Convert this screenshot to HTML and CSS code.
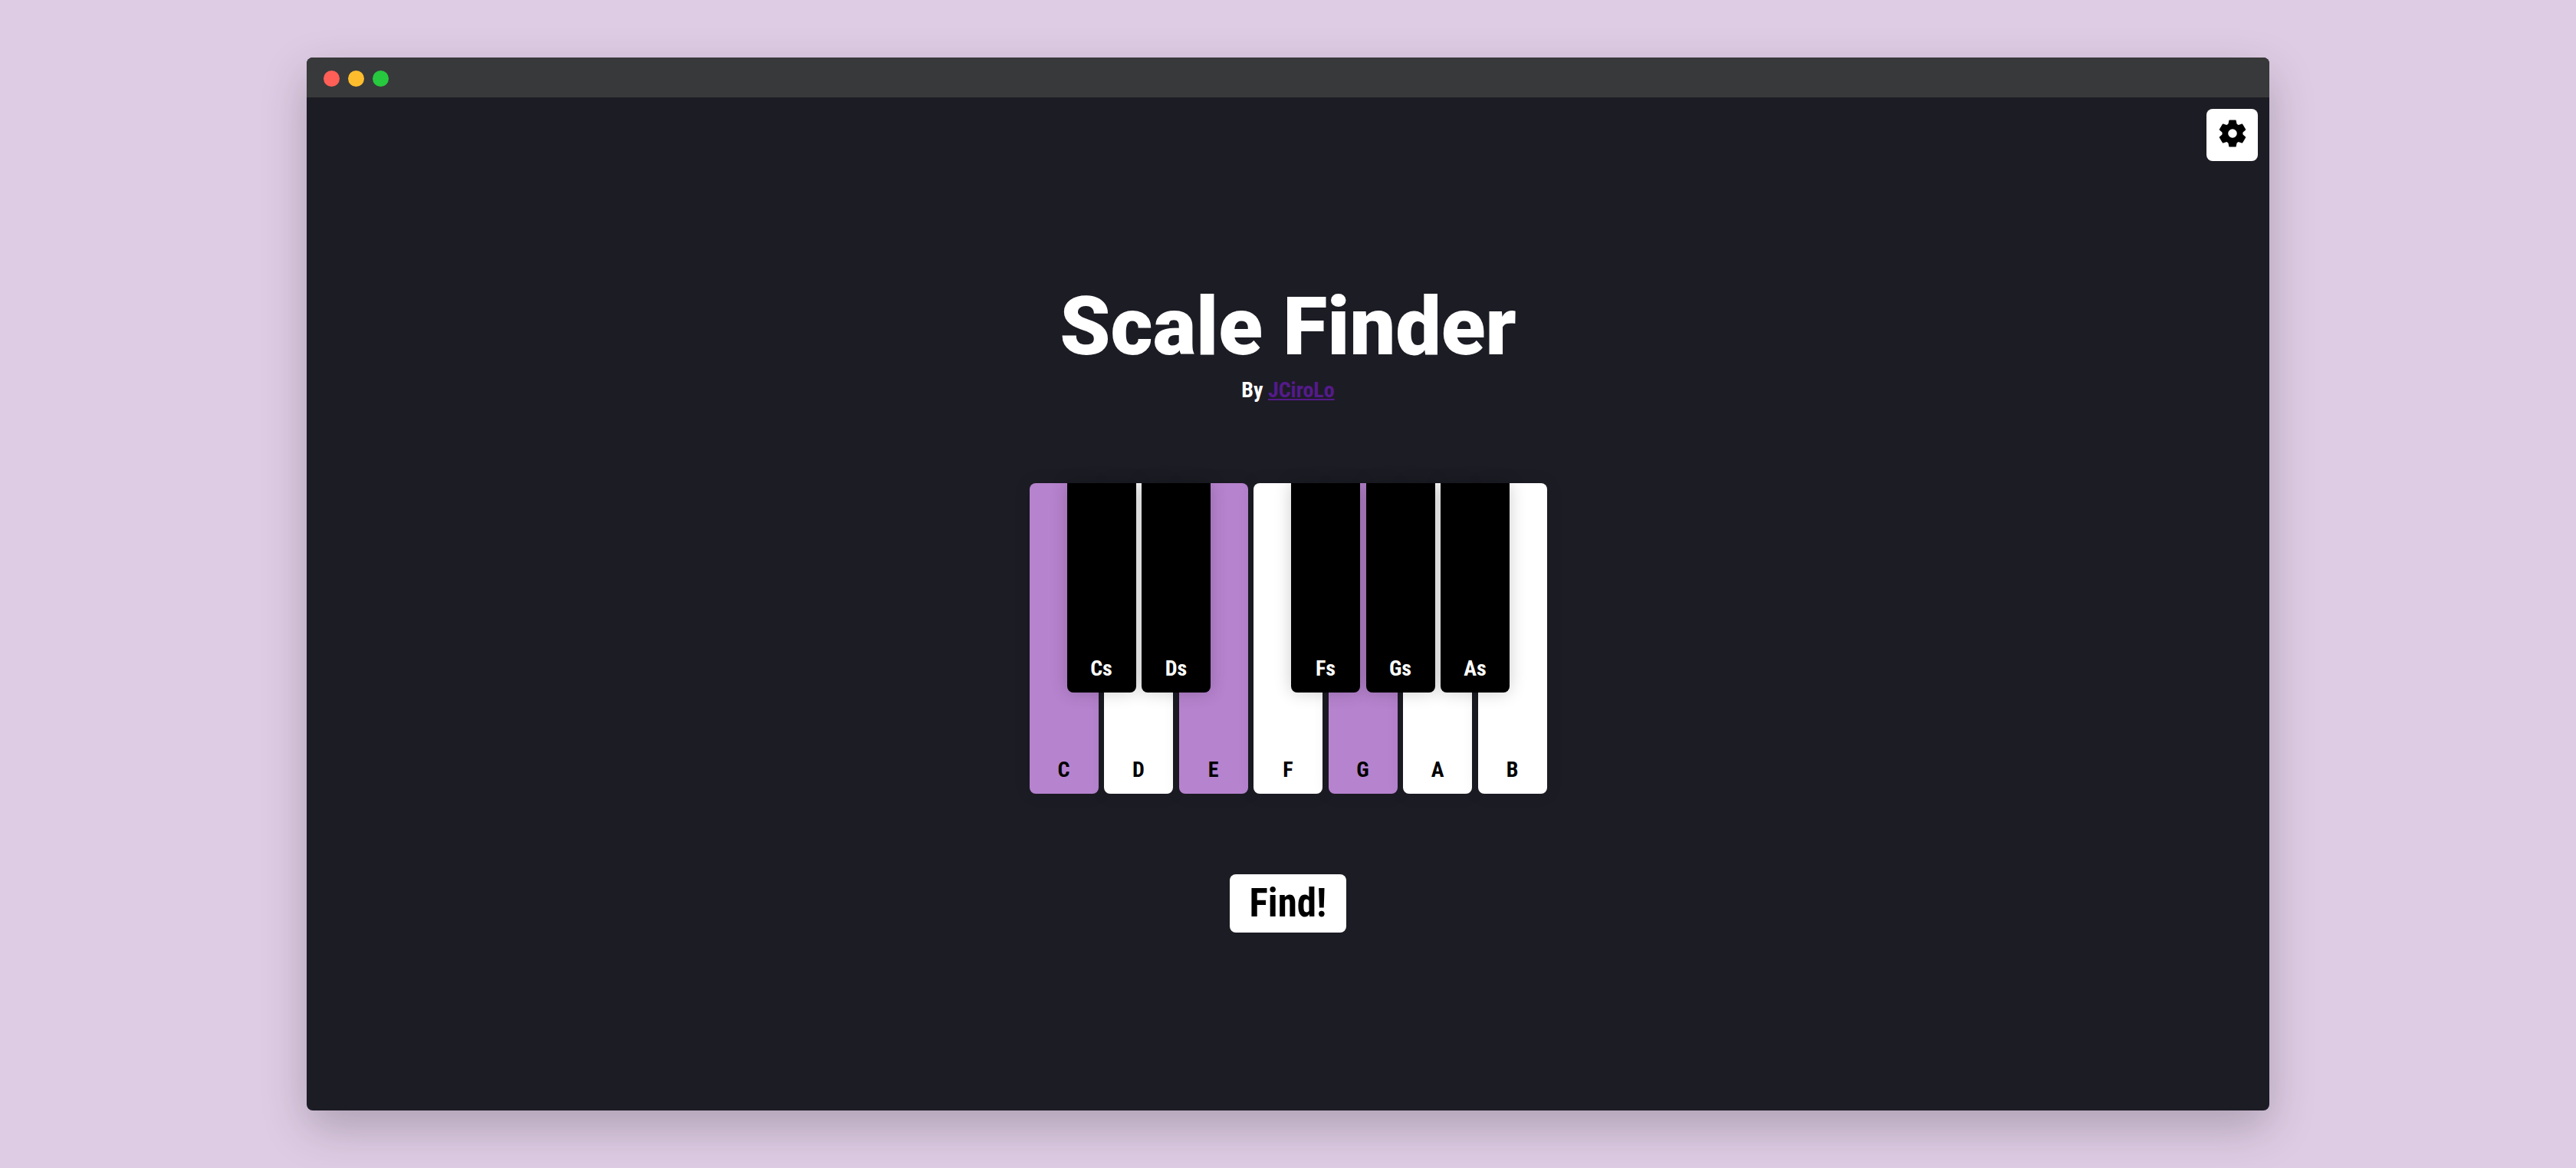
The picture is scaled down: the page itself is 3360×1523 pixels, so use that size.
FILE: index.html
```html
<!DOCTYPE html>
<html lang="en">
<head>
<meta charset="utf-8">
<title>Scale Finder</title>
<link rel="stylesheet" href="styles.css">
</head>
<body>
<div class="window">
  <div class="titlebar">
    <span class="dot dot-close"></span>
    <span class="dot dot-minimize"></span>
    <span class="dot dot-zoom"></span>
  </div>
  <main class="app">
    <button class="settings" type="button" aria-label="Settings">
      <svg class="gear" viewBox="-12 -12 24 24" aria-hidden="true">
        <circle r="5.500" fill="none" stroke="#000" stroke-width="4.400"/>
        <path id="tooth" d="M-2.200-10H2.200Q2.700-10 2.700-9.500L3.300-6.500H-3.300L-2.700-9.500Q-2.700-10-2.200-10z"/>
        <use href="#tooth" transform="rotate(60)"/>
        <use href="#tooth" transform="rotate(120)"/>
        <use href="#tooth" transform="rotate(180)"/>
        <use href="#tooth" transform="rotate(240)"/>
        <use href="#tooth" transform="rotate(300)"/>
      </svg>
    </button>
    <header class="heading">
      <h1 class="title">Scale Finder</h1>
      <p class="byline">By <a class="author" href="#jcirolo">JCiroLo</a></p>
    </header>
    <div class="piano">
      <div class="slot"><button class="key white selected" type="button">C</button><button class="key black" type="button">Cs</button></div>
      <div class="slot"><button class="key white" type="button">D</button><button class="key black" type="button">Ds</button></div>
      <div class="slot"><button class="key white selected" type="button">E</button></div>
      <div class="slot"><button class="key white" type="button">F</button><button class="key black" type="button">Fs</button></div>
      <div class="slot"><button class="key white selected" type="button">G</button><button class="key black" type="button">Gs</button></div>
      <div class="slot"><button class="key white" type="button">A</button><button class="key black" type="button">As</button></div>
      <div class="slot"><button class="key white" type="button">B</button></div>
    </div>
    <button class="find" type="button">Find!</button>
  </main>
</div>
</body>
</html>
```
FILE: styles.css
```css
* { box-sizing: border-box; }

body {
  margin: 0;
  min-height: 100vh;
  padding: 75px 24px;
  display: flex;
  justify-content: center;
  background: #decce4;
  font-family: "Roboto Condensed", "Liberation Sans Narrow", Roboto, sans-serif;
  font-weight: 700;
  color: #fff;
}

button {
  border: 0;
  padding: 0;
  font: inherit;
  cursor: pointer;
}

.window {
  width: 100%;
  max-width: 2560px;
  display: flex;
  flex-direction: column;
  border-radius: 8px;
  overflow: hidden;
  background: #1c1c25;
  box-shadow: 0 22px 60px rgba(0, 0, 0, 0.22);
}

.titlebar {
  height: 52px;
  padding: 3px 22px 0;
  display: flex;
  align-items: center;
  gap: 11px;
  background: #38393a;
}

.dot {
  width: 21px;
  height: 21px;
  border-radius: 50%;
}

.dot-close { background: #ff5f56; }
.dot-minimize { background: #ffbd2e; }
.dot-zoom { background: #27c93f; }

.app {
  position: relative;
  flex: 1;
  display: flex;
  flex-direction: column;
  align-items: center;
  justify-content: center;
}

.settings {
  position: absolute;
  top: 15px;
  right: 15px;
  width: 67px;
  height: 68px;
  display: flex;
  align-items: center;
  justify-content: center;
  border-radius: 8px;
  background: #fff;
}

.gear {
  width: 42px;
  height: 42px;
  margin-bottom: 4px;
}

.heading {
  margin-bottom: 105px;
  text-align: center;
}

.title {
  margin: 0;
  font-family: Roboto, sans-serif;
  font-size: 106px;
  font-weight: 900;
  line-height: 133px;
}

.byline {
  margin: 0;
  font-size: 28px;
  line-height: 32px;
}

.author { color: #551a8b; }

.piano {
  width: 675px;
  margin-bottom: 105px;
  display: flex;
  justify-content: space-between;
}

.slot { position: relative; }

.key {
  width: 90px;
  padding-bottom: 15px;
  display: flex;
  align-items: flex-end;
  justify-content: center;
  font-size: 28px;
  line-height: 32px;
}

.white {
  height: 405px;
  border-radius: 8px;
  background: #fff;
  color: #000;
  box-shadow: 0 0 22px rgba(0, 0, 0, 0.1);
}

.selected { background: #b683ce; }

/* Sharps straddle the gap between two naturals. */
.black {
  position: absolute;
  z-index: 1;
  top: 0;
  left: 49px;
  height: 273px;
  border-radius: 0 0 8px 8px;
  background: #000;
  color: #fff;
  box-shadow: 0 0 22px rgba(0, 0, 0, 0.2);
}

.find {
  padding: 8px 26px;
  border-radius: 8px;
  background: #fff;
  color: #000;
  font-size: 51px;
  line-height: 60px;
}
```
